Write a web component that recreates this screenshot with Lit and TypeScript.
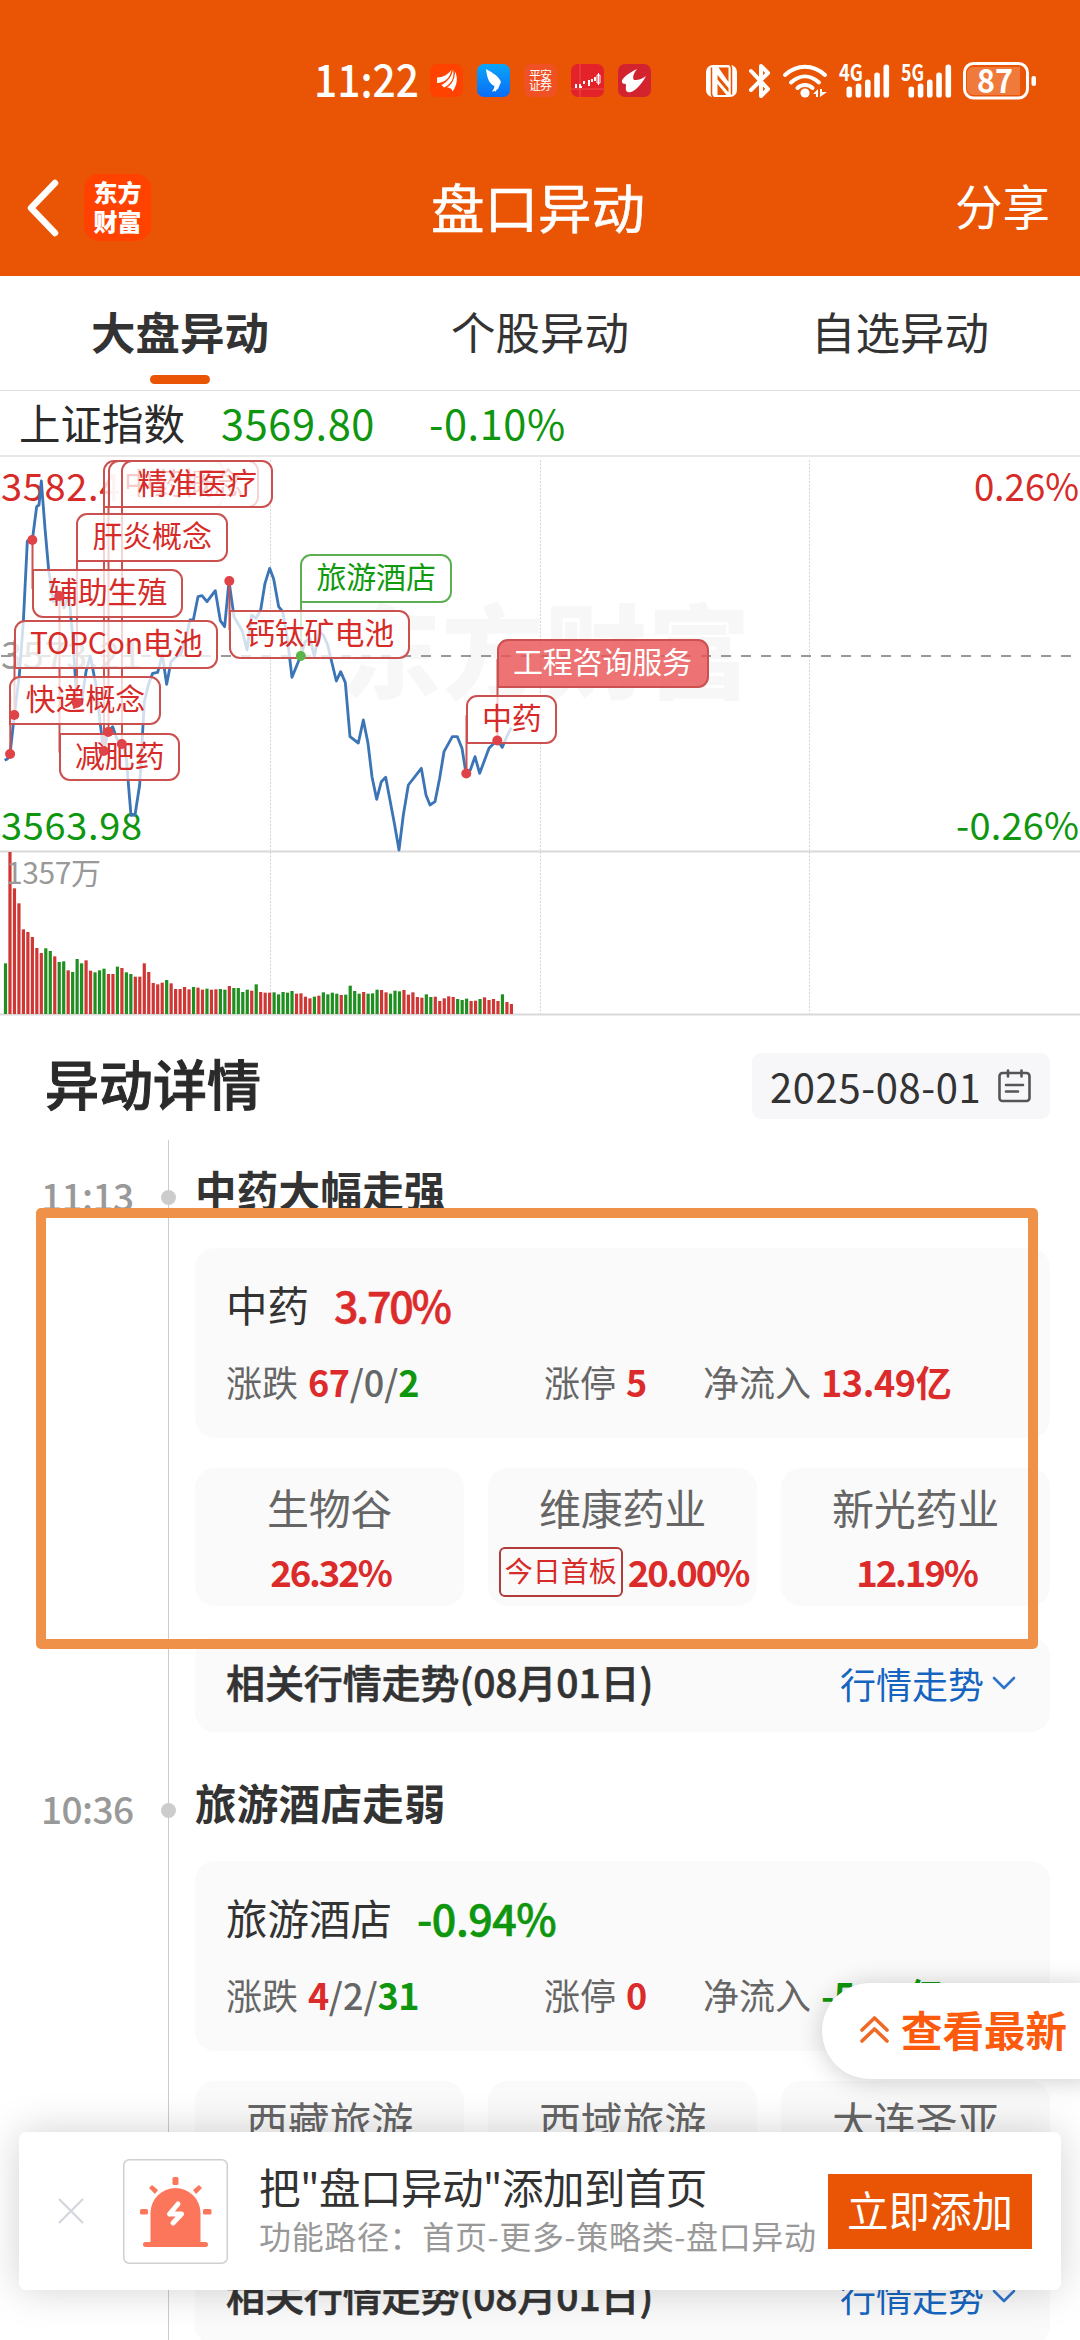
import { LitElement, html, svg, css } from "lit";
import { customElement, property } from "lit/decorators.js";
import { classMap } from "lit/directives/class-map.js";
import { styleMap } from "lit/directives/style-map.js";

interface Flag {
  text: string;
  x: number;
  y: number;
  w: number;
  dotY: number;
  tone: "up" | "down" | "solid";
}

interface Stock {
  name: string;
  pct: string;
  tag?: string;
}

interface Move {
  time: string;
  title: string;
  sector: string;
  pct: string;
  falling: boolean;
  up: string;
  flat: string;
  down: string;
  limit: string;
  inflow: string;
  stocks: Stock[];
}

// Flag positions in chart coordinates; the pole always runs along x to dotY.
const FLAGS: Flag[] = [
  { text: "", x: 103, y: 2.5, w: 121, dotY: 294, tone: "up" },
  { text: "中药概念", x: 107.5, y: 2.5, w: 151, dotY: 275, tone: "up" },
  { text: "精准医疗", x: 121, y: 2.5, w: 151.5, dotY: 287, tone: "up" },
  { text: "肝炎概念", x: 76, y: 56, w: 151.5, dotY: 246, tone: "up" },
  { text: "减肥药", x: 58.5, y: 275.5, w: 121, dotY: 139, tone: "up" },
  { text: "辅助生殖", x: 31.5, y: 112, w: 151.5, dotY: 83, tone: "up" },
  { text: "快递概念", x: 9.3, y: 219.3, w: 151.5, dotY: 297, tone: "up" },
  { text: "TOPCon电池", x: 13.5, y: 163.3, w: 204.5, dotY: 258, tone: "up" },
  { text: "旅游酒店", x: 300, y: 97, w: 151.5, dotY: 199, tone: "down" },
  { text: "钙钛矿电池", x: 228.5, y: 153, w: 181.5, dotY: 124, tone: "up" },
  { text: "工程咨询服务", x: 496.5, y: 182, w: 212, dotY: 283.5, tone: "solid" },
  { text: "中药", x: 465.5, y: 238.3, w: 91.5, dotY: 316.5, tone: "up" },
];

// Index price, in thirds of a pixel.
const PRICE =
  "14,916 22,912 30,898 43,780 58,660 70,500 82,258 97,255 110,155 117,150 124,78 135,220 146,345 160,440 177,422 192,458 207,420 219,560 231,745 245,740 258,650 271,603 280,650 290,700 300,800 311,888 324,830 338,815 350,850 365,868 378,900 393,1081 405,1080 419,990 433,740 445,690 458,655 473,652 487,600 500,688 513,620 528,605 541,600 560,540 570,495 580,495 594,425 606,422 621,440 646,407 661,497 674,515 687,378 702,485 727,528 741,585 755,480 768,490 782,465 795,385 809,340 821,372 836,455 848,470 862,550 876,667 902,603 916,560 930,550 943,605 957,530 970,540 983,570 1009,678 1022,650 1036,683 1050,845 1075,864 1090,795 1104,865 1116,965 1130,1033 1144,980 1157,967 1184,1110 1197,1185 1210,1080 1225,990 1264,940 1278,1020 1290,1050 1305,1040 1319,970 1332,890 1357,845 1372,845 1386,880 1398,955 1411,945 1425,905 1439,955 1467,880 1492,855 1507,877 1520,845 1534,818";

// Minute volume: colour letter and bar height in thirds of a pixel.
const VOLUME =
  "g152 r486 r377 r332 r254 r246 r231 r198 r183 g197 g189 r173 g156 g158 r131 g126 g165 g152 r161 r130 g125 g131 g136 r120 r120 g142 r138 g125 g120 r112 r112 r152 r126 r93 r89 r94 g102 r92 r75 r75 r81 r74 g81 r79 r73 g76 r73 r74 g75 g73 r84 g78 g78 g66 g73 r70 g89 r66 r64 r64 g65 g59 g66 g64 g69 r61 r62 r52 r47 g52 r55 g65 g59 g64 g61 r57 g58 g85 g69 g61 r66 g61 g62 g73 r72 r65 g61 g70 g68 r72 r58 r65 r51 r49 g59 g51 r52 r39 r47 r53 r51 g45 g42 g46 r39 r40 g45 r50 r42 r45 r39 g59 r36 r30";

const MOVES: Move[] = [
  {
    time: "11:13",
    title: "中药大幅走强",
    sector: "中药",
    pct: "3.70%",
    falling: false,
    up: "67",
    flat: "0",
    down: "2",
    limit: "5",
    inflow: "13.49亿",
    stocks: [
      { name: "生物谷", pct: "26.32%" },
      { name: "维康药业", pct: "20.00%", tag: "今日首板" },
      { name: "新光药业", pct: "12.19%" },
    ],
  },
  {
    time: "10:36",
    title: "旅游酒店走弱",
    sector: "旅游酒店",
    pct: "-0.94%",
    falling: true,
    up: "4",
    flat: "2",
    down: "31",
    limit: "0",
    inflow: "-5.11亿",
    stocks: [
      { name: "西藏旅游", pct: "" },
      { name: "西域旅游", pct: "" },
      { name: "大连圣亚", pct: "" },
    ],
  },
];

@customElement("status-bar")
class StatusBar extends LitElement {
  static styles = css`
    :host { display: block; height: 139px; background: #e95504; }
    svg { display: block; font-family: "Noto Sans CJK SC", sans-serif; }
    .clock { font-size: 44px; font-weight: 500; }
    .net { font-size: 23px; font-weight: 700; }
    .mini { font-size: 12px; font-weight: 400; }
    .level { font-size: 33px; font-weight: 700; }
  `;

  private signal(x: number) {
    return [0, 1, 2, 3, 4].map((i) => {
      const h = [11, 14, 18, 25, 33][i];
      return svg`<rect x=${x + i * 9.25} y=${97.5 - h} width="5.6" height=${h} rx="2.6" fill="#fff" />`;
    });
  }

  render() {
    return html`
      <svg width="1080" height="139" viewBox="0 0 1080 139" fill="none">
        <defs>
          <linearGradient id="sky" x1="0" y1="0" x2="0" y2="1">
            <stop offset="0" stop-color="#0aa5fb" /><stop offset="1" stop-color="#0a6cf5" />
          </linearGradient>
        </defs>
        <text class="clock" x="314" y="97" fill="#fff" textLength="105" lengthAdjust="spacingAndGlyphs">11:22</text>
        <rect x="430" y="64" width="33" height="33" rx="7" fill="#ff4200" />
        <path d="M437 77.500c6 0 11-3 14.500-7.500-1.500 8-7 13-14.500 13z" fill="#fff" />
        <path d="M441.500 85c6-3 10.500-8.500 11.500-15.500 2 8-2 15-9 18zM447 87.500c5-3 8-9 8-16 3 6 2.500 13-2.500 20-.5-3-2.500-4-5.500-4z" fill="#fff" />
        <rect x="477" y="64" width="33" height="33" rx="7" fill="url(#sky)" />
        <path d="M486 69c7 4 12 7 14 11l1 2-3 7-6 3 3-6c-5-1-8-7-9-17zM494 86l4 2-3 4z" fill="#fff" />
        <rect x="524" y="64" width="33" height="33" rx="7" fill="#ef5024" />
        <text class="mini" x="529" y="80" fill="#fff" textLength="23">平安</text>
        <text class="mini" x="529" y="90" fill="#fff" textLength="23">证券</text>
        <rect x="571" y="64" width="33" height="33" rx="7" fill="#e32229" />
        <path d="M580 64v33M571 89h33" stroke="#ee4a4c" />
        <path d="M576 84v4M580 84v3h2M584 81v3M589 80v6M592 79v3M595 77v4" stroke="#fff" stroke-width="2" />
        <path d="M598.500 73v12M597 75h3v8h-3z" stroke="#fff" />
        <rect x="618" y="64" width="33" height="33" rx="7" fill="#d3232f" />
        <path d="M637 69c-10 5-16 10-15 13 1 3 4 1 4 3 0 3-1 6 2 7 4 2 13-6 18-16-5 4-9 4-12 4-2-3 0-7 3-11z" fill="#fff" />
        <rect x="706" y="65" width="31" height="32" rx="7" fill="#fff" />
        <path d="M711.500 67.500v26c0 2 .5 3 2 3.500M731.500 94.500v-26c0-2-.5-3-2-3.500" stroke="#e95504" stroke-width="1.500" />
        <path d="M717.500 75l11 13v4.500l-11-13zM717.500 84l9 11h-9zM728.500 82l-10-14.500h10z" fill="#e95504" />
        <path d="M751 71l17 18-7 7V66l7 7-17 17" stroke="#fff" stroke-width="4" stroke-linecap="round" stroke-linejoin="round" />
        <path d="M785 75c12-11 28-11 40 0M791 82.500c9-8 19-8 28 0" stroke="#fff" stroke-width="4" stroke-linecap="round" />
        <path d="M797.500 88c4-4 11-4 15 0" stroke="#fff" stroke-width="4" stroke-linecap="round" />
        <circle cx="805" cy="93" r="4.600" fill="#fff" />
        <path d="M813 94l5-5v8h-2v-3zM820 97v-8h2v3h5z" fill="#fff" />
        <text class="net" x="839" y="81" fill="#fff" textLength="24" lengthAdjust="spacingAndGlyphs">4G</text>
        ${this.signal(846.5)}
        <text class="net" x="901" y="81" fill="#fff" textLength="23" lengthAdjust="spacingAndGlyphs">5G</text>
        ${this.signal(908.5)}
        <rect x="964.500" y="63.500" width="63" height="34.500" rx="9" stroke="#fff" stroke-width="3" />
        <path d="M973 67h47v28h-47a6 6 0 0 1-6-6V73a6 6 0 0 1 6-6z" fill="#f07a3c" />
        <rect x="1031.500" y="76" width="4.500" height="10" rx="2" fill="#fff" />
        <text class="level" x="977" y="92.500" fill="#fff" textLength="36" lengthAdjust="spacingAndGlyphs">87</text>
      </svg>
    `;
  }
}

@customElement("move-chart")
class MoveChart extends LitElement {
  static styles = css`
    :host { display: block; position: relative; height: 559px; overflow: hidden; }
    .plot { display: block; }
    .mark { font-size: 102px; font-weight: 900; }
    .axis { font-size: 38px; }
    .vol { font-size: 30px; }
    .flag {
      position: absolute; box-sizing: border-box; height: 48.5px; padding: 0 14.5px;
      border: 2px solid #cb5150; border-radius: 11px; background: rgba(255, 255, 255, 0.76);
      color: #d62b28; font-size: 30px; line-height: 39px; white-space: nowrap; letter-spacing: -0.2px;
    }
    .hang { border-top-left-radius: 0; }
    .stand { border-bottom-left-radius: 0; }
    .down { border-color: #5cb052; color: #109a10; }
    .solid { background: rgba(233, 84, 86, 0.82); color: #fff; }
    .dots { position: absolute; left: 0; top: 0; }
  `;

  private tone(f: Flag) {
    return f.tone === "down" ? "#58b548" : "#e04347";
  }

  private bars() {
    return VOLUME.split(" ").map((v, i) => {
      const h = Number(v.slice(1)) / 3;
      return svg`<rect x=${3.9 + i * 4.477} y=${557 - h} width="3.2" height=${h} fill=${v[0] === "g" ? "#1f8f1f" : "#cf3735"} />`;
    });
  }

  render() {
    return html`
      <svg class="plot" width="1080" height="559" viewBox="0 0 1080 559" fill="none" font-family="Noto Sans CJK SC, sans-serif">
        <text class="mark" x="339" y="234" fill="#f7f7f7" textLength="411">东方财富</text>
        <path d="M270.500 3v554M540.500 3v554M809.500 3v554" stroke="#d4d4d4" stroke-dasharray="2 1.500" />
        <path d="M0 394.500h1080M0 557.500h1080" stroke="#d9d9d9" stroke-width="2" />
        <text class="axis" x="1" y="44" fill="#d62b28" textLength="141">3582.44</text>
        <text class="axis" x="1" y="212" fill="#999" textLength="141">3573.21</text>
        <path d="M1 199h1079" stroke="#999" stroke-width="2" stroke-dasharray="10 10" />
        <text class="axis" x="974" y="44" fill="#d62b28" textLength="105" lengthAdjust="spacingAndGlyphs">0.26%</text>
        <text class="axis" x="956" y="383" fill="#0f960f" textLength="123">-0.26%</text>
        <text class="axis" x="1" y="383" fill="#0f960f" textLength="141">3563.98</text>
        ${this.bars()}
        <text class="vol" x="6" y="427" fill="#999" textLength="95">1357万</text>
        <polyline points=${PRICE} transform="translate(0 -2) scale(.33333)" stroke="#3b75b5" stroke-width="8.500" stroke-linejoin="round" />
        ${FLAGS.map((f) => svg`<path d="M${f.x + 1} ${f.y + 20}V${f.dotY}" stroke=${f.tone === "down" ? "#5cb052" : "#cb5150"} stroke-width="2" />`)}
      </svg>
      ${FLAGS.map(
        (f) => html`<div
          class=${classMap({ flag: true, [f.tone]: true, hang: f.dotY < f.y, stand: f.dotY >= f.y })}
          style=${styleMap({ left: `${f.x}px`, top: `${f.y}px`, width: `${f.w}px` })}
        >${f.text}</div>`
      )}
      <svg class="dots" width="1080" height="400" viewBox="0 0 1080 400">
        ${FLAGS.map((f) => svg`<circle cx=${f.x + 0.8} cy=${f.dotY} r="5" fill=${this.tone(f)} />`)}
      </svg>
    `;
  }
}

@customElement("move-item")
class MoveItem extends LitElement {
  @property({ attribute: false }) move!: Move;

  static styles = css`
    :host { display: grid; grid-template-columns: 168px 1px 26px 855px; height: 613px; box-sizing: border-box; }
    .time { padding: 30px 0 0 41px; color: #999; font-size: 37px; line-height: 50px; font-weight: 500; letter-spacing: -0.6px; }
    .rail { position: relative; background: #ccc; }
    .rail::after { content: ""; position: absolute; left: -7px; top: 50px; width: 15px; height: 15px; border-radius: 50%; background: #ccc; }
    .body { grid-column: 4; }
    .title { height: 108px; box-sizing: border-box; padding-top: 26px; font-size: 41.5px; line-height: 46px; font-weight: 700; color: #333; letter-spacing: 0.3px; }
    .card { height: 190px; box-sizing: border-box; padding: 32px 31px; border-radius: 20px; background: #fafafa; }
    .name { display: flex; gap: 25px; font-size: 41.5px; line-height: 48px; color: #333; }
    .name b { font-size: 43px; font-weight: 500; letter-spacing: -2.2px; -webkit-text-stroke: 0.6px; }
    .name b.down { letter-spacing: -0.5px; }
    .facts { display: grid; grid-template-columns: 318px 159px auto; margin-top: 31px; font-size: 36px; line-height: 44px; color: #666; }
    .facts b { margin-left: 10px; font-size: 36px; font-weight: 700; letter-spacing: -0.4px; }
    .facts i { font-style: normal; font-weight: 500; }
    .facts b ~ b { margin-left: 0; }
    .up { color: #dc2b2b; }
    .down { color: #0f960f; }
    .stocks { display: grid; grid-template-columns: repeat(3, 1fr); gap: 24px; margin-top: 30px; }
    .stock { height: 138px; box-sizing: border-box; padding-top: 16px; border-radius: 20px; background: #fafafa; text-align: center; }
    .sname { font-size: 42px; line-height: 46px; color: #666; letter-spacing: -0.3px; }
    .spct { display: flex; align-items: center; justify-content: center; gap: 5px; height: 50px; margin-top: 17px; padding-left: 2px; font-size: 36.5px; font-weight: 700; letter-spacing: -2.1px; color: #dc2b2b; line-height: 42px; }
    .tag { box-sizing: border-box; width: 124px; height: 50px; border: 2px solid #b23a3a; border-radius: 6px; font-size: 28px; line-height: 42px; font-weight: 400; letter-spacing: 0; color: #d62b28; }
    .trend { display: flex; justify-content: space-between; align-items: center; height: 95px; box-sizing: border-box; margin-top: 31px; padding: 0 34px 3px 31px; border-radius: 20px; background: #fafafa; }
    .trend strong { margin-top: -4px; font-size: 39px; font-weight: 500; color: #333; -webkit-text-stroke: 0.6px; letter-spacing: -0.1px; }
    .link { display: flex; align-items: center; gap: 8px; font-size: 36px; color: #1565c0; }
  `;

  render() {
    const m = this.move;
    const tone = m.falling ? "down" : "up";
    return html`
      <div class="time">${m.time}</div>
      <div class="rail"></div>
      <div class="body">
        <div class="title">${m.title}</div>
        <div class="card">
          <div class="name"><span>${m.sector}</span><b class=${tone}>${m.pct}</b></div>
          <div class="facts">
            <span>涨跌<b class="up">${m.up}</b><i>/${m.flat}/</i><b class="down">${m.down}</b></span>
            <span>涨停<b class="up">${m.limit}</b></span>
            <span>净流入<b class=${tone}>${m.inflow}</b></span>
          </div>
        </div>
        <div class="stocks">
          ${m.stocks.map(
            (s) => html`<div class="stock">
              <div class="sname">${s.name}</div>
              <div class="spct">${s.tag ? html`<span class="tag">${s.tag}</span>` : ""}${s.pct}</div>
            </div>`
          )}
        </div>
        <div class="trend">
          <strong>相关行情走势(08月01日)</strong>
          <span class="link">行情走势<svg width="24" height="18" viewBox="0 0 24 18"><path d="M2 4l10 10L22 4" fill="none" stroke="#2f74cc" stroke-width="2.600" stroke-linecap="round" stroke-linejoin="round" /></svg></span>
        </div>
      </div>
    `;
  }
}

@customElement("app-root")
class AppRoot extends LitElement {
  static styles = css`
    :host { display: block; position: relative; width: 1080px; height: 2340px; overflow: hidden; background: #fff; font-family: "Noto Sans CJK SC", sans-serif; color: #333; }
    svg { flex: none; }
    .nav { display: grid; grid-template-columns: 1fr auto 1fr; align-items: center; height: 137px; box-sizing: border-box; padding: 0 30px 0 26px; background: #e95504; color: #fff; }
    .left { display: flex; align-items: center; gap: 25px; }
    .logo { display: grid; align-content: center; width: 67px; height: 67px; border-radius: 15px; background: #ff4200; font-size: 24px; line-height: 29px; font-weight: 900; text-align: center; padding-bottom: 3px; box-sizing: border-box; }
    .heading { font-size: 53.5px; line-height: 70px; margin-top: -3px; -webkit-text-stroke: 0.6px; }
    .share { text-align: right; font-size: 47.5px; line-height: 60px; margin-top: -5px; }
    .tabs { display: grid; grid-template-columns: repeat(3, 1fr); height: 115px; box-sizing: border-box; border-bottom: 1px solid #e2e2e2; font-size: 44.5px; text-align: center; }
    .tab { padding-top: 25px; line-height: 60px; }
    .tab.on { font-weight: 700; }
    .tab.on::after { content: ""; display: block; width: 60px; height: 9px; margin: 14px auto 0; border-radius: 5px; background: #e95504; }
    .index { display: flex; height: 66px; box-sizing: border-box; border-bottom: 2px solid #e8e8e8; padding-left: 19px; font-size: 41.5px; line-height: 64px; color: #0f960f; }
    .index span { color: #2b2b2b; margin-right: 36px; }
    .index b { font-weight: 400; margin-right: 54px; letter-spacing: 0.6px; }
    .index > * { margin-top: -1px; }
    .top { display: flex; align-items: center; justify-content: space-between; height: 124px; padding: 0 30px 0 45px; box-sizing: border-box; }
    .top h2 { margin: 10px 0 0; font-size: 54px; line-height: 60px; font-weight: 500; color: #2a2a2a; -webkit-text-stroke: 1px; }
    .date { display: flex; align-items: center; gap: 17px; width: 298px; height: 66px; margin-top: 15px; padding-left: 18px; box-sizing: border-box; border-radius: 9px; background: #f7f7fa; font-size: 40px; line-height: 58px; letter-spacing: 0.6px; }
    .frame { position: absolute; left: 36px; top: 1208px; width: 1002px; height: 441px; box-sizing: border-box; border: 10px solid #f0914a; border-radius: 5px; }
    .latest { position: absolute; left: 822px; top: 1983px; width: 270px; height: 96px; box-sizing: border-box; padding: 0 0 4px 37px; display: flex; align-items: center; gap: 11px; border-radius: 48px 0 0 48px; background: #fff; box-shadow: 0 2px 26px rgba(0, 0, 0, 0.2); color: #fc5a0c; font-size: 41.5px; font-weight: 700; }
    .bar { position: absolute; left: 19px; top: 2132px; width: 1042px; height: 158px; box-sizing: border-box; padding: 0 29px 0 39px; display: flex; align-items: center; border-radius: 7px; background: #fff; box-shadow: 0 0 40px rgba(0, 0, 0, 0.18); }
    .bell { margin: 0 31px 0 39px; }
    .copy { flex: 1; white-space: nowrap; }
    .l1 { font-size: 41.5px; line-height: 54px; margin-top: -6px; letter-spacing: -0.55px; }
    .l2 { font-size: 32px; line-height: 44px; color: #999; letter-spacing: 0.65px; }
    .add { width: 204px; height: 75px; line-height: 70px; background: #e95504; color: #fff; font-size: 41.5px; text-align: center; }
  `;

  render() {
    return html`
      <status-bar></status-bar>
      <div class="nav">
        <div class="left">
          <svg width="33" height="58" viewBox="0 0 33 58"><path d="M29 4L5 29l24 25" fill="none" stroke="#fff" stroke-width="6.500" stroke-linecap="round" stroke-linejoin="round" /></svg>
          <div class="logo">东方<br />财富</div>
        </div>
        <div class="heading">盘口异动</div>
        <div class="share">分享</div>
      </div>
      <div class="tabs">
        <div class="tab on">大盘异动</div>
        <div class="tab">个股异动</div>
        <div class="tab">自选异动</div>
      </div>
      <div class="index"><span>上证指数</span><b>3569.80</b><b>-0.10%</b></div>
      <move-chart></move-chart>
      <div class="top">
        <h2>异动详情</h2>
        <div class="date">
          <span>2025-08-01</span>
          <svg width="33" height="34" viewBox="0 0 33 34" fill="none" stroke="#555" stroke-width="2.600" stroke-linecap="round"><rect x="1.500" y="4" width="30" height="28" rx="3" /><path d="M10 1.500v6M23.500 1.500v6M8 16h17M8 22.500h12" /></svg>
        </div>
      </div>
      ${MOVES.map((m) => html`<move-item .move=${m}></move-item>`)}
      <div class="frame"></div>
      <div class="latest">
        <svg width="31" height="31" viewBox="0 0 31 31" fill="none" stroke="#ee6a26" stroke-width="3.600" stroke-linecap="round" stroke-linejoin="round"><path d="M3 16L15.500 4 28 16M3 27l12.500-12L28 27" /></svg>
        <span>查看最新</span>
      </div>
      <div class="bar">
        <svg width="26" height="26" viewBox="0 0 26 26"><path d="M1 1l24 24M25 1L1 25" stroke="#d3d6dd" stroke-width="2.200" /></svg>
        <svg class="bell" width="105" height="105" viewBox="0 0 105 105">
          <rect x=".75" y=".75" width="103.500" height="103.500" rx="5.500" fill="#fff" stroke="#d0d0d0" stroke-width="1.500" />
          <path d="M27.500 83V54a25 25 0 0 1 50 0v29h5a2.500 2.500 0 0 1 0 5h-60a2.500 2.500 0 0 1 0-5z" fill="#fc765c" />
          <g fill="#fc765c"><rect x="49.500" y="18" width="6" height="8" rx="1.500" /><rect x="17" y="50" width="8" height="5.500" rx="1.500" /><rect x="80" y="50" width="8.500" height="5.500" rx="1.500" /><path d="M26 29l3-3 6 5-3 4zM79 29l-3-3-6 5 3 4z" /></g>
          <path d="M55 45l-8.500 10h12L50 64" fill="none" stroke="#fff" stroke-width="5" stroke-linecap="round" stroke-linejoin="round" />
        </svg>
        <div class="copy">
          <div class="l1">把"盘口异动"添加到首页</div>
          <div class="l2">功能路径：首页-更多-策略类-盘口异动</div>
        </div>
        <div class="add">立即添加</div>
      </div>
    `;
  }
}
